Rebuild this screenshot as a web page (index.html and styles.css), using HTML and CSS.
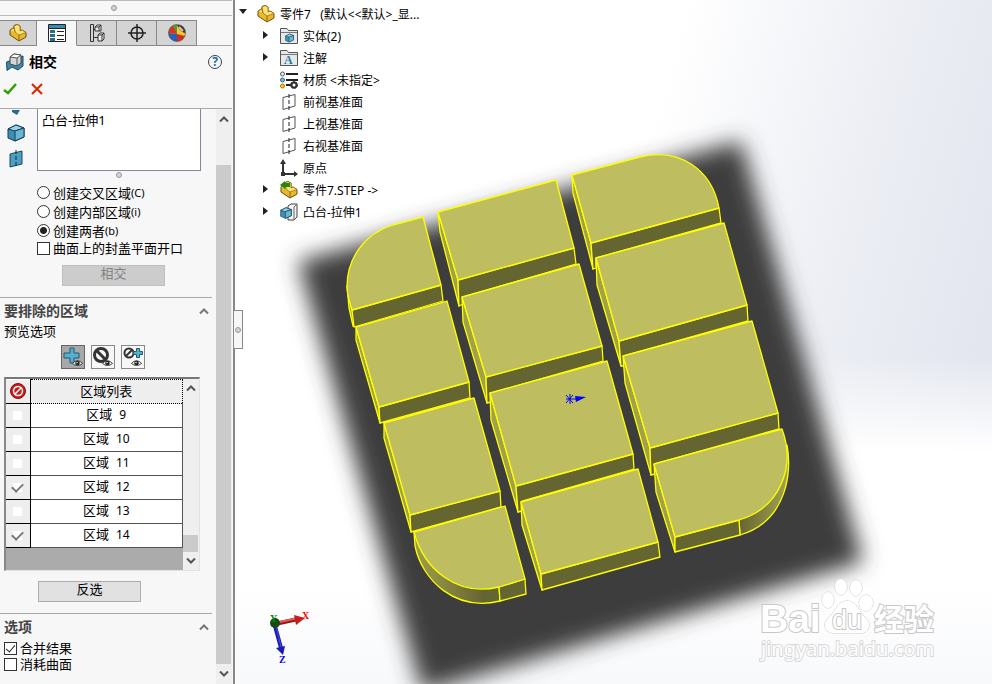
FILE: index.html
```html
<!DOCTYPE html>
<html lang="zh-CN">

<head>
    <meta charset="UTF-8">
    <meta name="viewport" content="width=device-width, initial-scale=1.0">
    <title>零件7</title>
    <link rel="stylesheet" href="styles.css">
</head>

<body>
    <svg class="defs" width="0" height="0">
        <defs>
            <symbol id="part" viewBox="0 0 18 18">
                <path d="M1 6 L5 3.500 L5 1.500 L8 .5 L11 2 L11 7 L13 6 L17 8.500 L17 13 L10 17 L1 11Z" fill="#e9b92c" stroke="#6d4d08" />
                <path d="M1 6 L5 4 L6 8 L10 11 L17 8.500 L13 6 L11 7 L11 2 L8 .5 L5 2 L6 8" fill="#ffe276" stroke="#8c6710" stroke-width=".7" />
                <path d="M10 11 V17" stroke="#8c6710" />
            </symbol>
            <symbol id="plane" viewBox="0 0 18 18">
                <path d="M3 4.500 L15 1.500 V13 L3 16.500Z" fill="none" stroke="#555" />
                <path d="M9 1 V18" stroke="#222" stroke-dasharray="4 2" />
            </symbol>
            <symbol id="folder" viewBox="0 0 18 18">
                <path d="M.5 16.500 V1.500 H7 L8.500 3.500 H17.500 V16.500Z" fill="#e6e8ea" stroke="#555" />
                <path d="M1 5.500 H17" stroke="#777" />
            </symbol>
            <symbol id="cube" viewBox="0 0 18 18">
                <path d="M1 5 L9 1 L17 4 V13 L8 17 L1 14Z" fill="#3e8fb6" stroke="#123e56" />
                <path d="M1 5 L9 1 L17 4 L8 7Z" fill="#9ad3e8" stroke="#123e56" />
                <path d="M8 7 L17 4 V13 L8 17Z" fill="#6bb5d3" stroke="#123e56" />
            </symbol>
            <symbol id="eye" viewBox="0 0 12 8">
                <path d="M.5 4.500 Q6 -1.500 11.500 4.500 Q6 9 .5 4.500Z" fill="#fff" stroke="#333" />
                <circle cx="6" cy="4" r="2.500" fill="#222" />
                <circle cx="5.500" cy="3.500" r=".8" fill="#fff" />
            </symbol>
            <symbol id="up" viewBox="0 0 10 8">
                <path d="M1 6.500 L5 2.500 L9 6.500" fill="none" stroke="currentColor" stroke-width="2" />
            </symbol>
            <symbol id="down" viewBox="0 0 10 8">
                <path d="M1 1.500 L5 5.500 L9 1.500" fill="none" stroke="currentColor" stroke-width="2" />
            </symbol>
        </defs>
    </svg>

    <div class="app">
        <aside class="panel">
            <div class="grip"><i class="dot"></i></div>
            <nav class="tabs">
                <button class="tab first" aria-label="特征树"><svg width="18" height="18"><use href="#part" /></svg></button>
                <button class="tab on" aria-label="属性">
                    <svg width="18" height="18" viewBox="0 0 18 18">
                        <path d="M.5 .5 H17.500 V17.500 H.5Z" fill="#fff" stroke="#222" />
                        <path d="M1 1 H17 V4 H1Z" fill="#3a8bad" />
                        <path d="M0 4.500 H18" stroke="#222" />
                        <path d="M2 6 H7 V9 H2Z M2 10 H7 V13 H2Z M2 14 H7 V17 H2Z" fill="#286c8c" />
                        <path d="M9 7.500 H16 M9 11.500 H16 M9 15.500 H16" stroke="#222" />
                    </svg>
                </button>
                <button class="tab" aria-label="配置">
                    <svg width="18" height="18" viewBox="0 0 18 18" fill="none" stroke="#333">
                        <path d="M2.500 .5 H5.500 V17.500 H2.500Z M5 5.500 H8 M5 13.500 H10" />
                        <path d="M7 3 L9 1 H13 V7 H7Z M7 3 H11 V7 M11 3 L13 1" fill="#eee" />
                        <path d="M10 11 L12 9 H16 V15 L14 17 H10Z M10 11 H14 V17 M14 11 L16 9" fill="#eee" />
                    </svg>
                </button>
                <button class="tab" aria-label="尺寸">
                    <svg width="18" height="18" viewBox="0 0 18 18" fill="none" stroke="#222" stroke-width="1.500">
                        <circle cx="9" cy="9" r="6" />
                        <path d="M9 0 V18 M0 9 H18" />
                    </svg>
                </button>
                <button class="tab" aria-label="外观">
                    <svg width="18" height="18" viewBox="0 0 18 18">
                        <circle cx="9" cy="9" r="8.500" fill="#f4ca27" />
                        <path d="M9 9 L.5 9 Q1 1 9 .5Z" fill="#41a33b" />
                        <path d="M9 10 L.5 9 Q1 4 5 2Z" fill="#e0301f" />
                        <path d="M9 10 L.5 9 Q1 17 9 17.500Z" fill="#2361bd" />
                        <path d="M9 10 L9 17.500 Q15 17 17 12Z" fill="#d92c20" />
                        <path d="M9 1 Q17 0 17.500 9 Q13 9 9 1Z" fill="#333" />
                        <path d="M11 3 L15 7" stroke="#eac1bb" stroke-width="2" />
                        <circle cx="9" cy="9" r="8.500" fill="none" stroke="#555" stroke-width=".7" />
                    </svg>
                </button>
            </nav>
            <header class="title">
                <svg width="18" height="18" viewBox="0 0 18 18">
                    <path d="M.5 9 L6 7 L17 3 V13 L12 17 L6 14 L1 17.500Z" fill="#3c87aa" stroke="#174a63" />
                    <path d="M4 4 L8 1 L15 2 V10 L11 13 L4 11Z" fill="#d5d5d5" stroke="#444" />
                    <path d="M4 4 L8 1 L15 2 L11 5Z" fill="#fff" stroke="#555" />
                    <path d="M11 5 V13" stroke="#555" />
                </svg>
                <h1>相交</h1>
                <button class="help" aria-label="帮助">?</button>
            </header>
            <div class="confirm">
                <button aria-label="确定"><svg width="14" height="12" viewBox="0 0 14 12"><path d="M1 7 L5 10 L13 1" fill="none" stroke="#35a000" stroke-width="2.500" /></svg></button>
                <button aria-label="取消"><svg width="12" height="12" viewBox="0 0 12 12"><path d="M1 1 L11 11 M11 1 L1 11" stroke="#dc2400" stroke-width="2" /></svg></button>
            </div>

            <div class="scroller">
                <div class="content">
                    <section class="select">
                        <div class="filters">
                            <svg width="8" height="6" viewBox="0 0 8 6"><path d="M0 0 H8 L5 5 L0 2Z" fill="#246c90" /></svg>
                            <svg width="18" height="18"><use href="#cube" /></svg>
                            <svg width="18" height="18" viewBox="0 0 18 18">
                                <path d="M3 4 L15 1 V14 L3 17Z" fill="#4b9fc2" stroke="#164a61" />
                                <path d="M9 0 V18" stroke="#222" stroke-dasharray="4 2" />
                            </svg>
                        </div>
                        <div class="picked">
                            <ul class="bodies"><li>凸台-拉伸1</li></ul>
                            <i class="dot"></i>
                        </div>
                    </section>
                    <div class="modes">
                        <label><input type="radio" name="mode">创建交叉区域<small>(C)</small></label>
                        <label><input type="radio" name="mode">创建内部区域<small>(i)</small></label>
                        <label><input type="radio" name="mode" checked>创建两者<small>(b)</small></label>
                        <label class="cap"><input type="checkbox">曲面上的封盖平面开口</label>
                        <button class="btn" disabled>相交</button>
                    </div>
                    <section class="exclude">
                        <h2>要排除的区域<svg width="12" height="8"><use href="#up" /></svg></h2>
                        <p>预览选项</p>
                        <div class="preview">
                            <button class="on" aria-label="显示包括">
                                <svg width="20" height="20" viewBox="0 0 20 20">
                                    <path d="M7 1 H11 V6 H16 V11 H11 V16 H7 V11 H1 V6 H7Z" fill="#56aed0" stroke="#235871" />
                                    <svg x="9" y="12" width="11" height="8"><use href="#eye" /></svg>
                                </svg>
                            </button>
                            <button aria-label="显示排除">
                                <svg width="20" height="20" viewBox="0 0 20 20">
                                    <circle cx="8" cy="8" r="6.500" fill="none" stroke="#333" stroke-width="3" />
                                    <path d="M4 4 L13 13" stroke="#333" stroke-width="3" />
                                    <svg x="9" y="12" width="11" height="8"><use href="#eye" /></svg>
                                </svg>
                            </button>
                            <button aria-label="显示全部">
                                <svg width="20" height="20" viewBox="0 0 20 20">
                                    <circle cx="6" cy="6" r="4.500" fill="none" stroke="#333" stroke-width="2" />
                                    <path d="M9 3 L3 9" stroke="#333" stroke-width="2" />
                                    <path d="M13.500 1.500 H16.500 V4.500 H19.500 V7.500 H16.500 V10.500 H13.500 V7.500 H10.500 V4.500 H13.500Z" fill="#56aed0" stroke="#235871" />
                                    <svg x="8" y="12" width="11" height="8"><use href="#eye" /></svg>
                                </svg>
                            </button>
                        </div>
                        <div class="grid">
                            <div class="rows">
                                <table>
                                    <thead>
                                        <tr>
                                            <th class="ban">
                                                <svg width="16" height="16" viewBox="0 0 16 16">
                                                    <circle cx="8" cy="8" r="7.500" fill="#ce1717" stroke="#8c0e0e" />
                                                    <circle cx="8" cy="8" r="4.500" fill="none" stroke="#fff" stroke-width="1.500" />
                                                    <path d="M11 5 L5 11" stroke="#fff" stroke-width="1.500" />
                                                </svg>
                                            </th>
                                            <th class="name">区域列表</th>
                                        </tr>
                                    </thead>
                                    <tbody>
                                        <tr><td><input type="checkbox" aria-label="区域 9"></td><td>区域<span>9</span></td></tr>
                                        <tr><td><input type="checkbox" aria-label="区域 10"></td><td>区域<span>10</span></td></tr>
                                        <tr><td><input type="checkbox" aria-label="区域 11"></td><td>区域<span>11</span></td></tr>
                                        <tr><td><input type="checkbox" aria-label="区域 12" checked></td><td>区域<span>12</span></td></tr>
                                        <tr><td><input type="checkbox" aria-label="区域 13"></td><td>区域<span>13</span></td></tr>
                                        <tr><td><input type="checkbox" aria-label="区域 14" checked></td><td>区域<span>14</span></td></tr>
                                    </tbody>
                                </table>
                            </div>
                            <div class="bar small">
                                <button aria-label="向上"><svg width="10" height="8"><use href="#up" /></svg></button>
                                <i class="thumb"></i>
                                <button aria-label="向下"><svg width="10" height="8"><use href="#down" /></svg></button>
                            </div>
                        </div>
                        <button class="btn invert">反选</button>
                    </section>
                    <section class="options">
                        <h2>选项<svg width="12" height="8"><use href="#up" /></svg></h2>
                        <label><input type="checkbox" checked>合并结果</label>
                        <label><input type="checkbox">消耗曲面</label>
                    </section>
                </div>
                <div class="bar">
                    <button aria-label="向上"><svg width="10" height="8"><use href="#up" /></svg></button>
                    <i class="thumb"></i>
                    <button aria-label="向下"><svg width="10" height="8"><use href="#down" /></svg></button>
                </div>
            </div>
        </aside>

        <main class="view">
            <svg class="scene" viewBox="235 0 757 684" preserveAspectRatio="xMinYMin meet">
                <defs>
                    <filter id="soft" x="-20%" y="-20%" width="140%" height="140%"><feGaussianBlur stdDeviation="11" /></filter>
                    <linearGradient id="bendL"><stop offset="0" stop-color="#9c9c4c" /><stop offset=".3" stop-color="#8b8b43" /><stop offset=".8" stop-color="#656532" /></linearGradient>
                    <linearGradient id="bendR"><stop offset="0" stop-color="#656532" /><stop offset="1" stop-color="#a3a353" /></linearGradient>
                </defs>
                <path d="M298 261 L741 141 L863 562 L422 692Z" fill="#3c3c3d" filter="url(#soft)" />

                <g class="solid">
                    <!-- left column -->
                    <path class="side" d="M347 286 L349 308 L353 326 L356 326 L352 310Z" />
                    <path class="front" d="M352 310 L441 285 L443 301 L354 327Z" />
                    <path class="top" d="M393 225 L423 217 L441 285 L352 310 C350 303 347 296 347 286 C347 260 363 234 393 225Z" />
                    <path class="side" d="M356 327 L356 340 L380 423 L379 407Z" />
                    <path class="front" d="M379 407 L469 382 L470 398 L380 423Z" />
                    <path class="top" d="M356 327 L447 301 L469 382 L379 407Z" />
                    <path class="side" d="M384 423 L384 438 L411 532 L410 515Z" />
                    <path class="front" d="M410 515 L500 491 L501 507 L411 532Z" />
                    <path class="top" d="M384 423 L474 398 L500 491 L410 515Z" />
                    <path fill="url(#bendL)" d="M414 532 L415 546 C422 580 455 612 500 601 L499 586 L450 560Z" />
                    <path class="front" d="M499 587 L525 579 L526 594 L500 601Z" />
                    <path class="top" d="M414 532 L505 506 L525 579 L499 587 C458 597 424 570 414 532Z" />

                    <!-- middle column -->
                    <path class="side" d="M438 212 L440 232 L459 306 L458 280Z" />
                    <path class="front" d="M458 280 L574 248 L576 264 L463 297 L463 304 L459 306Z" />
                    <path class="top" d="M438 212 L556 180 L574 248 L458 280Z" />
                    <path class="side" d="M462 297 L463 322 L487 403 L486 377Z" />
                    <path class="front" d="M486 377 L602 346 L603 361 L491 393 L491 402 L487 403Z" />
                    <path class="top" d="M462 297 L579 264 L602 346 L486 377Z" />
                    <path class="side" d="M490 393 L491 420 L518 512 L516 486Z" />
                    <path class="front" d="M516 486 L633 454 L634 469 L522 501 L522 511 L518 512Z" />
                    <path class="top" d="M490 393 L607 361 L633 454 L516 486Z" />
                    <path class="side" d="M521 502 L522 525 L542 590 L541 574Z" />
                    <path class="front" d="M541 574 L658 542 L660 557 L542 590Z" />
                    <path class="top" d="M521 502 L638 469 L658 542 L541 574Z" />

                    <!-- right column -->
                    <path class="side" d="M572 175 L573 193 L593 269 L591 243Z" />
                    <path class="front" d="M591 243 L719 208 L721 223 L596 258 L596 268 L593 269Z" />
                    <path class="top" d="M572 175 L640 157 C680 147 712 170 719 208 L591 243Z" />
                    <path class="side" d="M596 258 L597 285 L621 366 L619 341Z" />
                    <path class="front" d="M619 341 L747 305 L748 321 L624 356 L624 366 L621 366Z" />
                    <path class="top" d="M596 258 L724 223 L747 305 L619 341Z" />
                    <path class="side" d="M623 356 L625 383 L651 475 L650 448Z" />
                    <path class="front" d="M650 448 L778 413 L779 429 L655 464 L655 474 L651 475Z" />
                    <path class="top" d="M623 356 L752 321 L778 413 L650 448Z" />
                    <path fill="url(#bendR)" d="M739 520 L787 445 C792 470 788 521 740 535Z" />
                    <path class="side" d="M654 464 L656 492 L675 552 L675 537Z" />
                    <path class="front" d="M675 537 L739 520 L740 535 L675 552Z" />
                    <path class="top" d="M654 464 L782 429 C796 467 780 508 739 520 L675 537Z" />
                </g>

                <!-- origin marker -->
                <path d="M566 399 H578 M570 394 V404 M566 395 L573 403 M573 395 L566 403" stroke="#00f" />
                <path d="M575 396 L586 397 L576 402Z" fill="#00f" />

                <!-- axis triad -->
                <path d="M275 624 L298 619" stroke="#8e1b1b" stroke-width="4" />
                <path d="M275 623 L298 618" stroke="#ee5555" stroke-width="2" />
                <path d="M294 615 L305 618 L296 625Z" fill="#c51d1d" />
                <path d="M275 626 L281 648" stroke="#1c1cb0" stroke-width="4" />
                <path d="M276 626 L281 647" stroke="#4b4be8" />
                <path d="M276 648 L285 646 L283 655Z" fill="#1919b5" />
                <circle cx="275" cy="623" r="5" fill="#164b19" />
                <text class="axis" x="270" y="622" fill="#078707">Y</text>
                <text class="axis" x="302" y="619" fill="#f00">X</text>
                <text class="axis" x="279" y="663" fill="#00f">Z</text>

                <g class="mark">
                    <text class="bai" x="760" y="632">Bai</text>
                    <ellipse cx="828" cy="600" rx="6" ry="8" />
                    <ellipse cx="841" cy="587" rx="6" ry="8" />
                    <ellipse cx="856" cy="588" rx="6" ry="8" />
                    <ellipse cx="866" cy="603" rx="7" ry="8" />
                    <path d="M847 601 C857 601 859 612 865 617 C873 624 868 634 860 633 H834 C824 633 822 623 829 617 C836 612 837 601 847 601Z" />
                    <text class="du" x="832" y="629">du</text>
                    <text class="jy" x="874" y="630">经验</text>
                    <text class="url" x="761" y="656">jingyan.baidu.com</text>
                </g>
            </svg>

            <button class="handle" aria-label="折叠面板"><i class="dot"></i></button>

            <ul class="tree">
                <li class="root"><i class="open"></i><svg width="18" height="18"><use href="#part" /></svg><span>零件7&nbsp;&nbsp; (默认&lt;&lt;默认&gt;_显...</span></li>
                <li><i class="closed"></i><svg width="18" height="18"><use href="#folder" /><svg x="5" y="6" width="9" height="10"><use href="#cube" /></svg></svg><span>实体(2)</span></li>
                <li><i class="closed"></i><svg width="18" height="18"><use href="#folder" /><text class="note" x="4" y="15">A</text></svg><span>注解</span></li>
                <li><i></i><svg width="18" height="18" viewBox="0 0 18 18">
                    <circle cx="2.500" cy="3" r="2" fill="#eee" stroke="#555" /><circle cx="2.500" cy="9" r="2" fill="#75bfea" stroke="#367" /><circle cx="2.500" cy="15" r="2" fill="#ffc722" stroke="#a70" />
                    <path d="M6 3 H18 M6 9 H18 M6 14 H11" stroke="#222" stroke-width="2" />
                    <circle cx="14" cy="14" r="2.500" fill="none" stroke="#333" stroke-width="2" /><circle cx="14" cy="14" r="3.500" fill="none" stroke="#333" stroke-dasharray="2 1" />
                </svg><span>材质 &lt;未指定&gt;</span></li>
                <li><i></i><svg width="18" height="18"><use href="#plane" /></svg><span>前视基准面</span></li>
                <li><i></i><svg width="18" height="18"><use href="#plane" /></svg><span>上视基准面</span></li>
                <li><i></i><svg width="18" height="18"><use href="#plane" /></svg><span>右视基准面</span></li>
                <li><i></i><svg width="18" height="18" viewBox="0 0 18 18"><path d="M3 3 V15 H16" fill="none" stroke="#333" stroke-width="2" /><path d="M0 5 L3 0 L6 5Z M14 12 L18 15 L14 18Z M1 13 H5 V17 H1Z" fill="#333" /></svg><span>原点</span></li>
                <li><i class="closed"></i><svg width="18" height="18"><use href="#part" /><path d="M0 4 L5 0 V2 H10 V6 H5 V8Z" fill="#238a10" /></svg><span>零件7.STEP -&gt;</span></li>
                <li><i class="closed"></i><svg width="18" height="18" viewBox="0 0 18 18">
                    <path d="M8 3 L11 1 H17 V14 L14 17 H8Z" fill="#f4f4f4" stroke="#444" /><path d="M14 17 V4 L17 1" fill="none" stroke="#666" />
                    <svg x="0" y="4" width="12" height="12"><use href="#cube" /></svg>
                </svg><span>凸台-拉伸1</span></li>
            </ul>
        </main>
    </div>
</body>

</html>
```

FILE: styles.css
```css
* {
    box-sizing: border-box;
}

body {
    margin: 0;
    font: 13px/16px "Noto Sans", "Noto Sans CJK SC", sans-serif;
    color: #000;
}

button {
    padding: 0;
    border: 0;
    background: none;
    font: inherit;
    display: flex;
    align-items: center;
    justify-content: center;
}

ul {
    margin: 0;
    padding: 0;
    list-style: none;
}

.defs {
    position: absolute;
}

.app {
    display: flex;
    height: 100vh;
    overflow: hidden;
}

/* left property panel */
.panel {
    flex: none;
    width: 235px;
    display: flex;
    flex-direction: column;
    background: #f7f7f7;
    border-right: 2px solid #888;
    padding-right: 1px;
}

.dot {
    display: block;
    width: 6px;
    height: 6px;
    border: 1px solid #999;
    border-radius: 50%;
    background: #d4d4d4;
}

.grip {
    height: 16px;
    display: flex;
    align-items: center;
    justify-content: center;
    padding-right: 4px;
    border-top: 1px solid #bbb;
    border-bottom: 1px solid #bbb;
}

.tabs {
    display: flex;
    height: 30px;
    padding-top: 4px;
    border-bottom: 1px solid #aaa;
}

.tab {
    width: 40px;
    height: 26px;
    background: #d4d4d4;
    border: 1px solid #888;
    border-left: 0;
}

.tab.first {
    width: 37px;
}

.tab.on {
    background: #f7f7f7;
    border-bottom-color: #f7f7f7;
}

.title {
    display: flex;
    align-items: center;
    gap: 5px;
    height: 32px;
    padding: 0 10px 0 6px;
}

.title h1 {
    flex: 1;
    margin: 0;
    font-size: 14px;
    line-height: 20px;
}

.help {
    width: 14px;
    height: 14px;
    border: 1px solid #345;
    border-radius: 50%;
    color: #1d6f9c;
    font-size: 12px;
    font-weight: bold;
}

.confirm {
    display: flex;
    gap: 14px;
    height: 31px;
    padding: 0 3px 8px;
    border-bottom: 1px solid #aaa;
}

.scroller {
    flex: 1;
    min-height: 0;
    display: flex;
    overflow: hidden;
}

.content {
    flex: 1;
    padding-right: 4px;
}

.select {
    display: flex;
    gap: 12px;
    padding-left: 7px;
}

.filters {
    display: flex;
    flex-direction: column;
    align-items: center;
    gap: 8px;
    width: 18px;
    padding-top: 1px;
}

.picked {
    display: flex;
    flex-direction: column;
    align-items: center;
    gap: 1px;
    width: 164px;
}

.bodies {
    width: 100%;
    height: 62px;
    padding: 3px 4px;
    background: #fff;
    border: 1px solid #8587a0;
    border-top: 0;
}

.modes {
    padding: 5px 0 11px 37px;
}

label {
    display: flex;
    align-items: center;
}

.modes label {
    height: 19px;
}

.modes label.cap {
    height: 16px;
}

small {
    font-size: 11px;
}

input {
    appearance: none;
    flex: none;
    width: 13px;
    height: 13px;
    margin: 0 3px 0 0;
    border: 1px solid #333;
    background: #fff;
}

input[type="radio"] {
    border-radius: 50%;
}

input[type="radio"]:checked {
    background: radial-gradient(circle, #222 3px, #fff 4px);
}

/* tick drawn from a rotated corner */
input[type="checkbox"]:checked::after {
    content: "";
    display: block;
    width: 4px;
    height: 8px;
    margin: 0 auto;
    border: solid #222;
    border-width: 0 1px 1px 0;
    transform: rotate(40deg);
}

.btn {
    width: 103px;
    height: 21px;
    background: #e1e1e1;
    border: 1px solid #adadad;
    padding-bottom: 5px;
}

.modes .btn {
    margin: 9px 0 0 25px;
    background: #ccc;
    border-color: #bfbfbf;
    color: #838383;
}

h2 {
    display: flex;
    align-items: center;
    justify-content: space-between;
    margin: 0;
    padding-right: 2px;
    font-size: 14px;
    line-height: 20px;
    color: #444;
}

h2 svg {
    color: #777;
}

.exclude,
.options {
    border-top: 1px solid #aaa;
    padding: 3px 0 0 4px;
}

.exclude p {
    margin: 0;
    line-height: 20px;
}

.preview {
    display: flex;
    gap: 6px;
    padding: 4px 0 8px 57px;
}

.preview button {
    width: 24px;
    height: 24px;
    border: 1px solid #888;
}

.preview .on {
    background: #a8a8a8;
    border-color: #666;
}

.grid {
    display: flex;
    width: 196px;
    height: 194px;
    border: 1px solid #e2e2e2;
    border-top: 2px solid #777;
    border-left: 2px solid #888;
}

.rows {
    flex: 1;
    background: #ababab;
}

table {
    width: 100%;
    border-collapse: collapse;
    table-layout: fixed;
    background: #fff;
}

th,
td {
    height: 24px;
    padding: 0 0 2px;
    border-bottom: 1px solid #555;
    border-right: 1px solid #555;
    text-align: center;
    font-weight: normal;
}

th {
    background: #eee;
}

th.name {
    border: 1px dotted #000;
}

th:first-child,
td:first-child {
    width: 24px;
    background: #eee;
    padding: 0;
    border-right: 1px solid #000;
    border-bottom: 1px solid #000;
}

th svg,
td input {
    display: block;
    margin: 0 auto;
}

td input {
    width: 9px;
    height: 9px;
    border: 0;
}

td input[type="checkbox"]:checked::after {
    width: 5px;
    height: 9px;
    border-color: #777;
    border-width: 0 2px 2px 0;
    transform: translateY(-2px) rotate(45deg);
}

td span {
    margin-left: 7px;
    font-size: 12px;
}

.invert {
    margin: 10px 0 11px 34px;
}

.options h2 {
    margin-bottom: 3px;
}

/* scrollbars */
.bar {
    flex: none;
    width: 16px;
    display: flex;
    flex-direction: column;
    background: #efefef;
    color: #555;
}

.bar button {
    height: 20px;
    color: inherit;
}

.bar .thumb {
    flex: 1;
    margin-top: 36px;
    margin-right: 1px;
    background: #cbcbcb;
}

.bar.small .thumb {
    flex: none;
    height: 17px;
    margin-top: auto;
}

.bar.small button {
    height: 18px;
}

/* graphics area */
.view {
    flex: 1;
    min-width: 0;
    position: relative;
    background:
        linear-gradient(180deg, transparent 52%, #fff 66%, #fff 85%, #f8f9fb 100%),
        linear-gradient(105deg, #fff 48%, #eceef4 72%, #dde1ec 100%);
}

.scene {
    display: block;
    width: 100%;
    height: 100%;
}

.solid path {
    stroke: #ff0;
    stroke-width: 1.3;
    stroke-linejoin: round;
}

.top {
    fill: #bebe60;
}

.front {
    fill: #656532;
}

.side {
    fill: #a0a04d;
}

.axis {
    font: bold 10px "Liberation Serif", serif;
}

.mark {
    fill: #fff;
    stroke: #c8c8c8;
    stroke-width: 1;
    paint-order: stroke;
}

.bai {
    font: bold 39px "Liberation Sans", sans-serif;
    stroke-width: 2;
}

.du {
    font: 27px "Liberation Sans", sans-serif;
    stroke-width: 2;
}

.jy {
    font: bold 30px "Noto Sans CJK SC", sans-serif;
    stroke-width: 2;
}

.url {
    font: 20px "Noto Sans", sans-serif;
    stroke: #d8d8d8;
    stroke-width: 2;
}

.handle {
    position: absolute;
    left: -1px;
    top: 310px;
    width: 9px;
    height: 39px;
    background: #f7f7f7;
    border: 1px solid #888;
    border-left: 0;
}

.tree {
    position: absolute;
    left: 0;
    top: 3px;
    font-size: 12px;
}

.tree li {
    display: flex;
    align-items: center;
    gap: 5px;
    height: 22px;
    padding-left: 27px;
    white-space: nowrap;
}

.tree .root {
    padding-left: 4px;
}

.tree span {
    padding-top: 2px;
}

.tree i {
    width: 13px;
    height: 10px;
}

.tree .closed::before {
    content: "";
    display: block;
    width: 0;
    border: 4px solid transparent;
    border-left: 5px solid #222;
    margin-left: 1px;
}

.tree .open::before {
    content: "";
    display: block;
    width: 0;
    border: 4px solid transparent;
    border-top: 5px solid #222;
}

.note {
    font: bold 12px "Liberation Serif", serif;
    fill: #267da5;
}
```
